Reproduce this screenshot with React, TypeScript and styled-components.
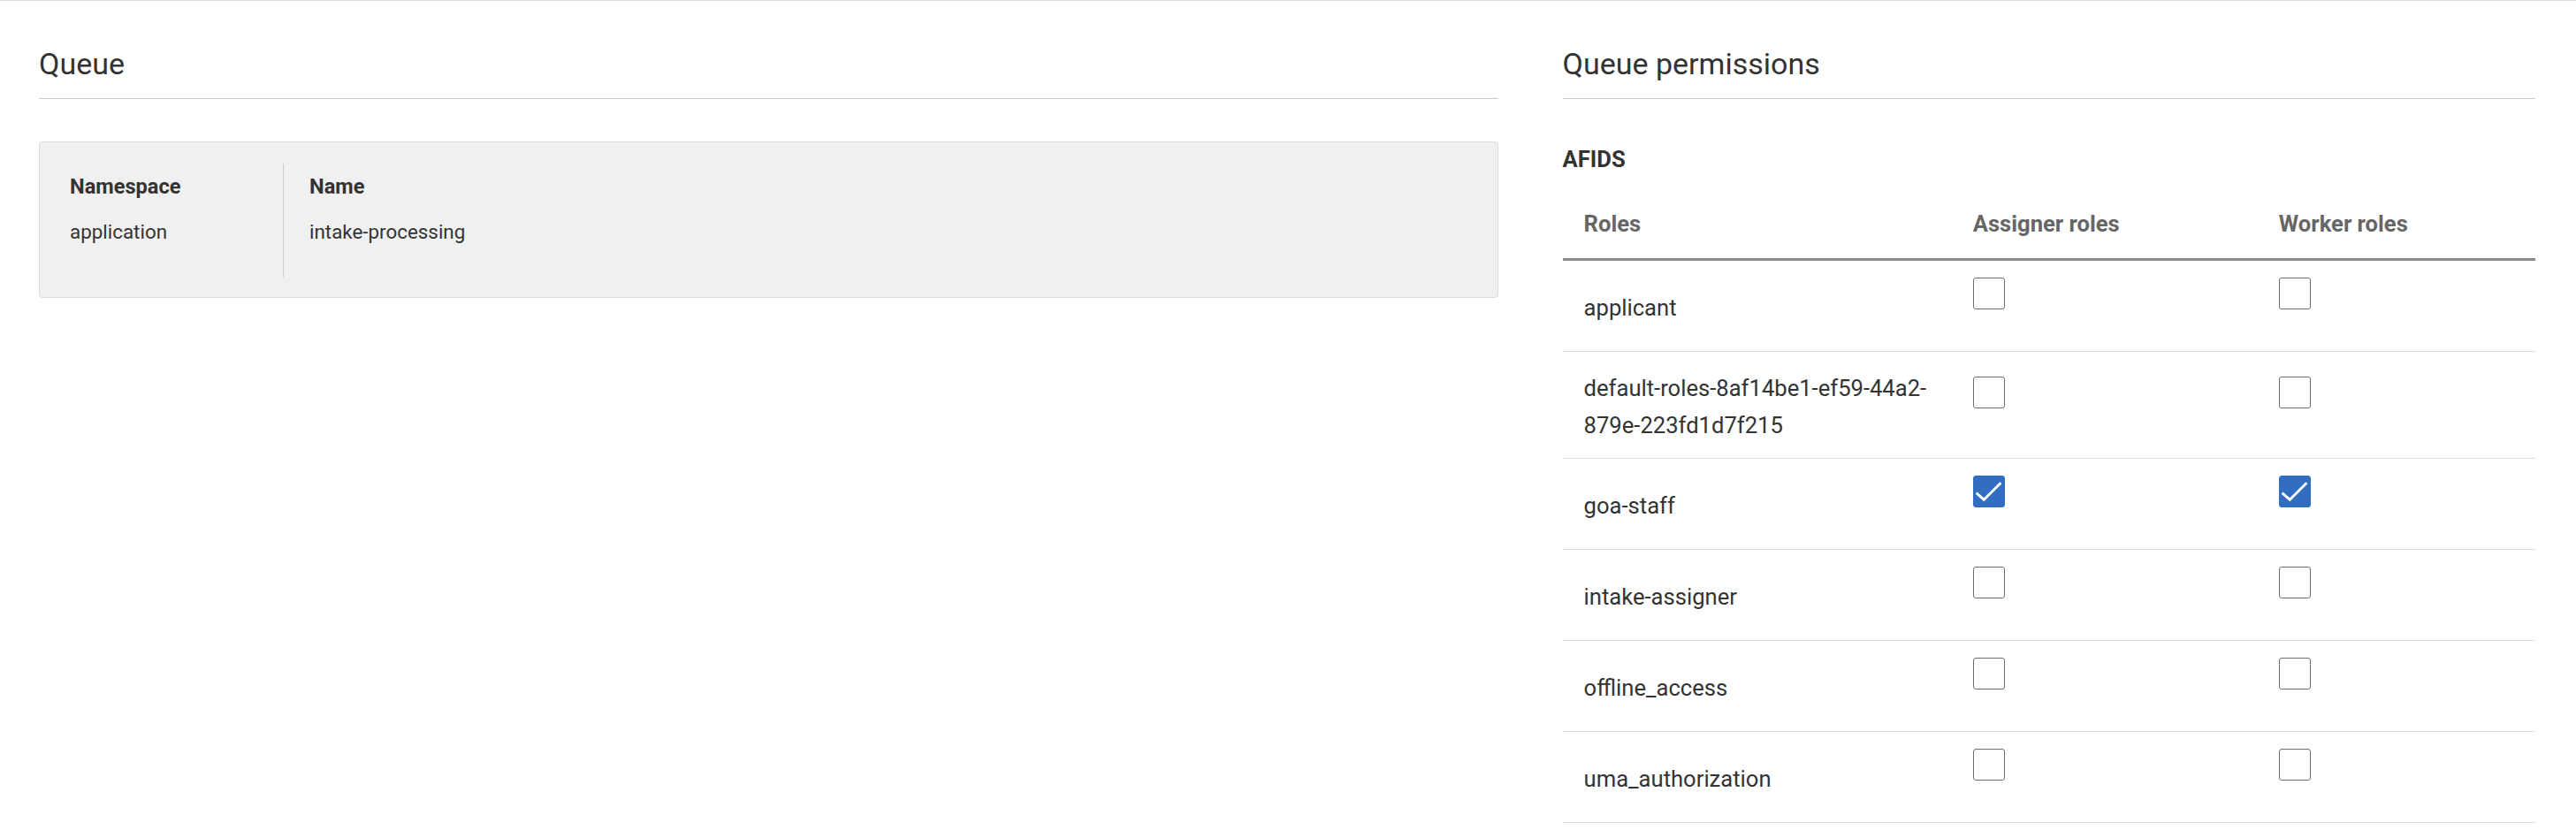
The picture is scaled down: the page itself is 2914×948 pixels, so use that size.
import React from "react";
import styled, { createGlobalStyle } from "styled-components";

const GlobalStyle = createGlobalStyle`
  html, body {
    margin: 0;
    padding: 0;
    background: #ffffff;
  }
  body {
    font-family: Roboto, "Liberation Sans", Arial, sans-serif;
    color: #333333;
  }
  * { box-sizing: border-box; }
`;

const Page = styled.div`
  border-top: 1px solid #dcdcdc;
  padding: 51px 46px 0 44px;
  display: grid;
  grid-template-columns: 3fr 2fr;
  column-gap: 73px;
  align-items: start;
`;

const Column = styled.section`
  display: flex;
  flex-direction: column;
  min-width: 0;
`;

const SectionTitle = styled.h2`
  margin: 0;
  font-size: 34px;
  line-height: 40px;
  font-weight: 400;
  color: #333333;
  padding-bottom: 19px;
  border-bottom: 1px solid #cccccc;
`;

const Card = styled.div`
  margin-top: 48px;
  background: #f0f0f0;
  border: 1px solid #dcdcdc;
  border-radius: 4px;
  padding: 24px 34px 23px;
  display: flex;
`;

const DetailItem = styled.div<{ $first?: boolean }>`
  height: 128px;
  padding-top: 8px;
  display: flex;
  flex-direction: column;
  ${(p) =>
    p.$first
      ? `width: 242px; border-right: 1px solid #cccccc;`
      : `padding-left: 29px;`}
`;

const DetailLabel = styled.div`
  font-size: 23.6px;
  line-height: 36px;
  font-weight: 700;
  color: #333333;
`;

const DetailValue = styled.div`
  margin-top: 14.6px;
  font-size: 22.4px;
  line-height: 36px;
  font-weight: 400;
  color: #333333;
`;

const GroupTitle = styled.h3`
  margin: 52.8px 0 0;
  font-size: 25.6px;
  line-height: 30px;
  font-weight: 700;
  color: #333333;
`;

const Table = styled.table`
  margin-top: 26px;
  width: 100%;
  table-layout: fixed;
  border-collapse: separate;
  border-spacing: 0;
`;

const HeadCell = styled.th`
  text-align: left;
  font-size: 25.6px;
  line-height: 32px;
  font-weight: 700;
  color: #666666;
  padding: 16px 24px 23px;
  border-bottom: 3px solid #888888;
`;

const BodyCell = styled.td`
  font-size: 25.6px;
  line-height: 42px;
  font-weight: 400;
  color: #333333;
  padding: 20px 24px 16px;
  vertical-align: middle;
  border-bottom: 1px solid #dddddd;
  word-break: break-word;
`;

const CheckCell = styled(BodyCell)`
  padding: 18px 24px 18px;
  line-height: 0;
`;

const CheckboxBox = styled.span<{ $checked: boolean }>`
  display: inline-flex;
  align-items: center;
  justify-content: center;
  width: 36px;
  height: 36px;
  margin: 1px 0 29px;
  border-radius: 3px;
  border: 1px solid ${(p) => (p.$checked ? "#316ec1" : "#6e6e6e")};
  background: ${(p) => (p.$checked ? "#316ec1" : "#ffffff")};
`;

const Checkbox: React.FC<{ checked: boolean }> = ({ checked }) => (
  <CheckboxBox $checked={checked} role="checkbox" aria-checked={checked}>
    {checked && (
      <svg width="36" height="36" viewBox="0 0 36 36" style={{ margin: -1 }}>
        <polyline
          points="4.7,20.6 12.3,27.3 30.3,9.3"
          fill="none"
          stroke="#ffffff"
          strokeWidth="3"
          strokeLinecap="square"
        />
      </svg>
    )}
  </CheckboxBox>
);

const roles = [
  { name: "applicant", assigner: false, worker: false },
  { name: "default-roles-8af14be1-ef59-44a2-879e-223fd1d7f215", assigner: false, worker: false },
  { name: "goa-staff", assigner: true, worker: true },
  { name: "intake-assigner", assigner: false, worker: false },
  { name: "offline_access", assigner: false, worker: false },
  { name: "uma_authorization", assigner: false, worker: false },
];

export default function App() {
  return (
    <>
      <GlobalStyle />
      <Page>
        <Column>
          <SectionTitle>Queue</SectionTitle>
          <Card>
            <DetailItem $first>
              <DetailLabel>Namespace</DetailLabel>
              <DetailValue>application</DetailValue>
            </DetailItem>
            <DetailItem>
              <DetailLabel>Name</DetailLabel>
              <DetailValue>intake-processing</DetailValue>
            </DetailItem>
          </Card>
        </Column>
        <Column>
          <SectionTitle>Queue permissions</SectionTitle>
          <GroupTitle>AFIDS</GroupTitle>
          <Table>
            <colgroup>
              <col style={{ width: "40%" }} />
              <col style={{ width: "31.45%" }} />
              <col />
            </colgroup>
            <thead>
              <tr>
                <HeadCell>Roles</HeadCell>
                <HeadCell>Assigner roles</HeadCell>
                <HeadCell>Worker roles</HeadCell>
              </tr>
            </thead>
            <tbody>
              {roles.map((r) => (
                <tr key={r.name}>
                  <BodyCell>{r.name}</BodyCell>
                  <CheckCell>
                    <Checkbox checked={r.assigner} />
                  </CheckCell>
                  <CheckCell>
                    <Checkbox checked={r.worker} />
                  </CheckCell>
                </tr>
              ))}
            </tbody>
          </Table>
        </Column>
      </Page>
    </>
  );
}
